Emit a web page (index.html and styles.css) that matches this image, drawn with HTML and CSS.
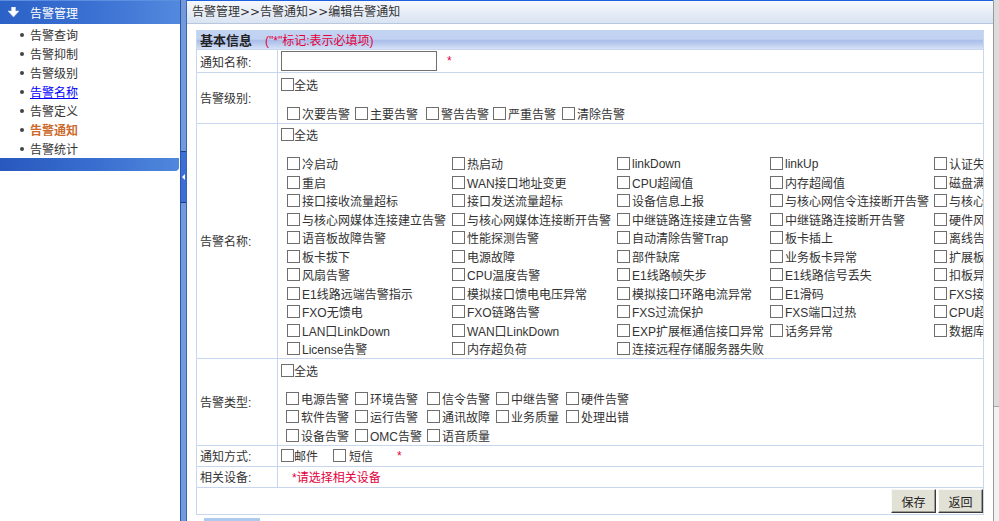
FILE: index.html
```html
<!DOCTYPE html>
<html lang="zh-CN">
<head>
<meta charset="utf-8">
<title>编辑告警通知</title>
<link rel="stylesheet" href="styles.css">
</head>
<body>
<div class="page">
  <aside class="sidebar">
    <div class="side-head">
      <svg class="head-icon" viewBox="0 0 11 10" width="11" height="10"><path d="M3.5 0H7.5V4H11L5.5 10L0 4H3.5Z" fill="#ffffff" stroke="#c9d6ef" stroke-width="0.6"/></svg>
      <span>告警管理</span>
    </div>
    <ul class="menu">
      <li><span class="dot"></span>告警查询</li>
      <li><span class="dot"></span>告警抑制</li>
      <li><span class="dot"></span>告警级别</li>
      <li><span class="dot"></span><a href="#" class="link">告警名称</a></li>
      <li><span class="dot"></span>告警定义</li>
      <li class="active"><span class="dot"></span>告警通知</li>
      <li><span class="dot"></span>告警统计</li>
    </ul>
    <div class="side-foot"></div>
  </aside>
  <div class="divider">
    <div class="grip"><svg viewBox="0 0 3 6" width="3" height="6"><path d="M3 0V6L0 3Z" fill="#ffffff"/></svg></div>
  </div>
  <main class="main">
    <div class="crumb">告警管理&gt;&gt;告警通知&gt;&gt;编辑告警通知</div>
    <table class="form">
      <colgroup><col class="c-label"><col class="c-field"></colgroup>
      <tr><th colspan="2" class="sect"><b>基本信息</b><span class="req-note">("*"标记:表示必填项)</span></th></tr>
      <tr class="r-name">
        <td class="lbl">通知名称:</td>
        <td class="fld"><div class="inline"><input type="text" class="txt"><span class="star">*</span></div></td>
      </tr>
      <tr>
        <td class="lbl">告警级别:</td>
        <td class="fld top"><div class="wrap">
          <label class="selall"><input type="checkbox" class="cb">全选</label>
          <div class="opts lvl">
            <label><input type="checkbox" class="cb">次要告警</label>
            <label><input type="checkbox" class="cb">主要告警</label>
            <label><input type="checkbox" class="cb">警告告警</label>
            <label><input type="checkbox" class="cb">严重告警</label>
            <label><input type="checkbox" class="cb">清除告警</label>
          </div>
        </div></td>
      </tr>
      <tr>
        <td class="lbl">告警名称:</td>
        <td class="fld top"><div class="wrap">
          <label class="selall"><input type="checkbox" class="cb">全选</label>
          <div class="opts names">
            <label><input type="checkbox" class="cb">冷启动</label>
            <label><input type="checkbox" class="cb">热启动</label>
            <label><input type="checkbox" class="cb">linkDown</label>
            <label><input type="checkbox" class="cb">linkUp</label>
            <label><input type="checkbox" class="cb">认证失败</label>
            <label><input type="checkbox" class="cb">重启</label>
            <label><input type="checkbox" class="cb">WAN接口地址变更</label>
            <label><input type="checkbox" class="cb">CPU超阈值</label>
            <label><input type="checkbox" class="cb">内存超阈值</label>
            <label><input type="checkbox" class="cb">磁盘满告警</label>
            <label><input type="checkbox" class="cb">接口接收流量超标</label>
            <label><input type="checkbox" class="cb">接口发送流量超标</label>
            <label><input type="checkbox" class="cb">设备信息上报</label>
            <label><input type="checkbox" class="cb">与核心网信令连接断开告警</label>
            <label><input type="checkbox" class="cb">与核心网信令连接建立告警</label>
            <label><input type="checkbox" class="cb">与核心网媒体连接建立告警</label>
            <label><input type="checkbox" class="cb">与核心网媒体连接断开告警</label>
            <label><input type="checkbox" class="cb">中继链路连接建立告警</label>
            <label><input type="checkbox" class="cb">中继链路连接断开告警</label>
            <label><input type="checkbox" class="cb">硬件风扇告警</label>
            <label><input type="checkbox" class="cb">语音板故障告警</label>
            <label><input type="checkbox" class="cb">性能探测告警</label>
            <label><input type="checkbox" class="cb">自动清除告警Trap</label>
            <label><input type="checkbox" class="cb">板卡插上</label>
            <label><input type="checkbox" class="cb">离线告警</label>
            <label><input type="checkbox" class="cb">板卡拔下</label>
            <label><input type="checkbox" class="cb">电源故障</label>
            <label><input type="checkbox" class="cb">部件缺席</label>
            <label><input type="checkbox" class="cb">业务板卡异常</label>
            <label><input type="checkbox" class="cb">扩展板异常</label>
            <label><input type="checkbox" class="cb">风扇告警</label>
            <label><input type="checkbox" class="cb">CPU温度告警</label>
            <label><input type="checkbox" class="cb">E1线路帧失步</label>
            <label><input type="checkbox" class="cb">E1线路信号丢失</label>
            <label><input type="checkbox" class="cb">扣板异常</label>
            <label><input type="checkbox" class="cb">E1线路远端告警指示</label>
            <label><input type="checkbox" class="cb">模拟接口馈电电压异常</label>
            <label><input type="checkbox" class="cb">模拟接口环路电流异常</label>
            <label><input type="checkbox" class="cb">E1滑码</label>
            <label><input type="checkbox" class="cb">FXS接口异常</label>
            <label><input type="checkbox" class="cb">FXO无馈电</label>
            <label><input type="checkbox" class="cb">FXO链路告警</label>
            <label><input type="checkbox" class="cb">FXS过流保护</label>
            <label><input type="checkbox" class="cb">FXS端口过热</label>
            <label><input type="checkbox" class="cb">CPU超负荷</label>
            <label><input type="checkbox" class="cb">LAN口LinkDown</label>
            <label><input type="checkbox" class="cb">WAN口LinkDown</label>
            <label><input type="checkbox" class="cb">EXP扩展框通信接口异常</label>
            <label><input type="checkbox" class="cb">话务异常</label>
            <label><input type="checkbox" class="cb">数据库异常</label>
            <label><input type="checkbox" class="cb">License告警</label>
            <label><input type="checkbox" class="cb">内存超负荷</label>
            <label><input type="checkbox" class="cb">连接远程存储服务器失败</label>
          </div>
        </div></td>
      </tr>
      <tr>
        <td class="lbl">告警类型:</td>
        <td class="fld top"><div class="wrap">
          <label class="selall"><input type="checkbox" class="cb">全选</label>
          <div class="opts types">
            <label><input type="checkbox" class="cb">电源告警</label>
            <label><input type="checkbox" class="cb">环境告警</label>
            <label><input type="checkbox" class="cb">信令告警</label>
            <label><input type="checkbox" class="cb">中继告警</label>
            <label><input type="checkbox" class="cb">硬件告警</label>
            <label><input type="checkbox" class="cb">软件告警</label>
            <label><input type="checkbox" class="cb">运行告警</label>
            <label><input type="checkbox" class="cb">通讯故障</label>
            <label><input type="checkbox" class="cb">业务质量</label>
            <label><input type="checkbox" class="cb">处理出错</label>
            <label><input type="checkbox" class="cb">设备告警</label>
            <label><input type="checkbox" class="cb">OMC告警</label>
            <label><input type="checkbox" class="cb">语音质量</label>
          </div>
        </div></td>
      </tr>
      <tr class="r-small">
        <td class="lbl">通知方式:</td>
        <td class="fld"><div class="inline">
          <label class="plain"><input type="checkbox" class="cb">邮件</label>
          <label class="plain second"><input type="checkbox" class="cb gap">短信</label>
          <span class="star far">*</span>
        </div></td>
      </tr>
      <tr class="r-small">
        <td class="lbl">相关设备:</td>
        <td class="fld"><div class="inline"><span class="hint">*请选择相关设备</span></div></td>
      </tr>
      <tr class="r-btn">
        <td colspan="2" class="btns"><div class="btnbar"><button type="button" class="btn">保存</button><button type="button" class="btn">返回</button></div></td>
      </tr>
    </table>
    <div class="peek"></div>
  </main>
  <div class="vscroll"><div class="thumb"></div></div>
</div>
</body>
</html>
```
FILE: styles.css
```css
html, body {
  margin: 0;
  padding: 0;
  background: #ffffff;
}
body {
  font-family: "Liberation Sans", "Noto Sans CJK SC", sans-serif;
  font-size: 12px;
  color: #333333;
  overflow: hidden;
}
.page {
  display: flex;
  width: 999px;
  height: 521px;
  overflow: hidden;
}

/* ---------- sidebar ---------- */
.sidebar {
  width: 180px;
  flex: none;
  background: #ffffff;
}
.side-head {
  height: 24px;
  display: flex;
  align-items: center;
  color: #ffffff;
  background: linear-gradient(to right, #2c61c7 0%, #3a70d2 50%, #5389dd 100%);
  box-shadow: inset 0 1px 0 #5d8fe0;
}
.head-icon {
  margin-left: 8px;
  margin-right: 11px;
  flex: none;
}
.menu {
  list-style: none;
  margin: 0;
  padding: 1px 0 0 0;
}
.menu li {
  height: 19px;
  display: flex;
  align-items: center;
  padding-left: 20px;
  color: #333333;
  white-space: nowrap;
}
.dot {
  width: 4px;
  height: 4px;
  border-radius: 50%;
  background: #444444;
  margin-right: 6px;
  flex: none;
}
.link {
  color: #0000ff;
  text-decoration: underline;
}
.menu li.active {
  color: #cc6a2c;
  font-weight: bold;
}
.side-foot {
  height: 13px;
  width: 179px;
  background: linear-gradient(to right, #2858bd 0%, #3a6fd0 55%, #5088dc 100%);
  border-bottom-right-radius: 4px;
}

/* ---------- divider ---------- */
.divider {
  width: 7px;
  flex: none;
  box-sizing: border-box;
  background: #7399dd;
  border-left: 1px solid #2b55a8;
  border-right: 1px solid #3a63b2;
  padding-top: 151px;
}
.grip {
  height: 50px;
  background: #3c6ed8;
  border-top: 1px solid #1d3d88;
  border-bottom: 1px solid #1d3d88;
  display: flex;
  align-items: center;
  justify-content: center;
}

/* ---------- main ---------- */
.main {
  flex: 1;
  min-width: 0;
  display: flex;
  flex-direction: column;
}
.crumb {
  height: 22px;
  line-height: 22px;
  border-top: 1px solid #1c62e0;
  border-bottom: 1px solid #b6c7de;
  background: linear-gradient(#f6f8fc, #d9e3f2);
  padding-left: 5px;
  font-family: "DejaVu Sans", "Noto Sans CJK SC", sans-serif;
  font-size: 12px;
  color: #333333;
  white-space: nowrap;
}

.form {
  margin: 6px 0 0 9px;
  width: 788px;
  table-layout: fixed;
  border-collapse: separate;
  border-spacing: 0;
  border-left: 1px solid #c8d6ee;
}
.c-label { width: 81px; }
.form th,
.form td {
  padding: 0;
  border-right: 1px solid #c8d6ee;
  border-bottom: 1px solid #c8d6ee;
}
.sect {
  height: 19px;
  text-align: left;
  padding-left: 3px !important;
  font-weight: normal;
  background: linear-gradient(#c3d3f2 0%, #c1d1f1 48%, #aabee9 55%, #b6c8ee 70%, #d7e2f6 100%);
  white-space: nowrap;
}
.sect b {
  font-size: 13px;
  color: #222222;
}
.req-note {
  margin-left: 13px;
  color: #e3003c;
}
.lbl {
  padding-left: 3px !important;
  color: #333333;
  vertical-align: middle;
  white-space: nowrap;
}
.fld.top {
  vertical-align: top;
}
.wrap {
  overflow: hidden;
  padding-top: 1px;
}
.r-name td {
  height: 22px;
}
.r-small td {
  height: 20px;
}
.inline {
  display: flex;
  align-items: center;
  padding-left: 3px;
  white-space: nowrap;
}
.txt {
  width: 156px;
  height: 20px;
  box-sizing: border-box;
  border: 1px solid #707070;
  margin: 0;
  padding: 0 2px;
  font: inherit;
}
.star {
  color: #e3003c;
  margin-left: 10px;
}
.star.far {
  margin-left: 24px;
}
.cb {
  -webkit-appearance: none;
  appearance: none;
  width: 13px;
  height: 13px;
  box-sizing: border-box;
  border: 1px solid #6e6e6e;
  background: #ffffff;
  margin: 0 2px 0 0;
  flex: none;
}
.selall {
  display: flex;
  align-items: center;
  height: 20px;
  padding-left: 3px;
}
.selall .cb {
  margin-right: 0;
}
.opts {
  display: grid;
  grid-auto-rows: 18.5px;
  margin: 10px 0 0 9px;
}
.opts label {
  display: flex;
  align-items: center;
  white-space: nowrap;
}
.lvl {
  grid-template-columns: 68px 71px 67px 69px 90px;
}
.names {
  grid-template-columns: 165px 165px 153px 164px 170px;
}
.types {
  margin-top: 9px;
  margin-left: 8px;
  grid-template-columns: 69px 72px 69px 70px 80px;
}
.plain {
  display: flex;
  align-items: center;
}
.plain .cb {
  margin-right: 0;
}
.plain.second {
  margin-left: 15px;
}
.plain .cb.gap {
  margin-right: 3px;
}
.hint {
  color: #e3003c;
  margin-left: 11px;
}
.r-btn td {
  height: 26px;
}
.btnbar {
  display: flex;
  justify-content: flex-end;
  gap: 2px;
  padding-top: 1px;
  height: 25px;
  box-sizing: border-box;
}
.btn {
  width: 45px;
  height: 24px;
  padding: 0;
  font-family: "Liberation Sans", "Noto Sans CJK SC", sans-serif;
  font-size: 12px;
  color: #222222;
  background: #e2e1d6;
  border: 1px solid;
  border-color: #f8f8f4 #3a3a3a #3a3a3a #f8f8f4;
  box-shadow: inset -1px -1px 0 #9c9b92;
}
.peek {
  margin: 3px 0 0 17px;
  width: 56px;
  height: 8px;
  background: #aecbee;
  flex: none;
}

/* ---------- scrollbar stub ---------- */
.vscroll {
  width: 6px;
  flex: none;
  box-sizing: border-box;
  border-left: 1px solid #9a9a9a;
  background: #f1f1f1;
}
.thumb {
  height: 406px;
  background: #dcdcdc;
  border-bottom: 1px solid #a5a5a5;
}
```
